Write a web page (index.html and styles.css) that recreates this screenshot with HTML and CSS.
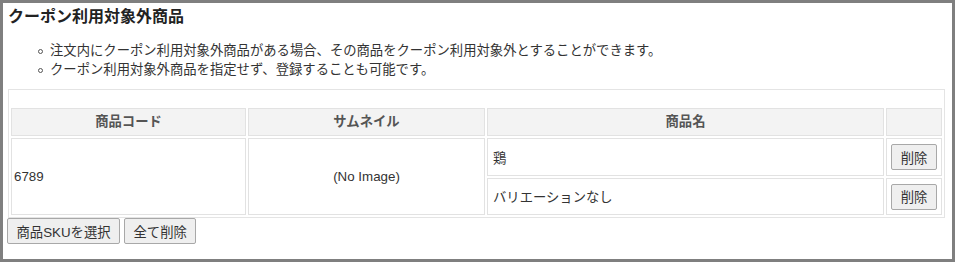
FILE: index.html
```html
<!DOCTYPE html>
<html lang="ja">
<head>
<meta charset="utf-8">
<link rel="stylesheet" href="styles.css">
</head>
<body>
<div class="frame">
  <h2 class="title">クーポン利用対象外商品</h2>
  <ul class="notes">
    <li>注文内にクーポン利用対象外商品がある場合、その商品をクーポン利用対象外とすることができます。</li>
    <li>クーポン利用対象外商品を指定せず、登録することも可能です。</li>
  </ul>
  <table class="items">
    <colgroup>
      <col class="c-code"><col class="c-thumb"><col class="c-name"><col class="c-act">
    </colgroup>
    <thead>
      <tr><th>商品コード</th><th>サムネイル</th><th>商品名</th><th></th></tr>
    </thead>
    <tbody>
      <tr class="r1">
        <td rowspan="2" class="code">6789</td>
        <td rowspan="2" class="thumb">(No Image)</td>
        <td class="name">鶏</td>
        <td class="act"><button class="btn">削除</button></td>
      </tr>
      <tr class="r2">
        <td class="name">バリエーションなし</td>
        <td class="act"><button class="btn">削除</button></td>
      </tr>
    </tbody>
  </table>
  <div class="actions">
    <button class="btn big">商品SKUを選択</button>
    <button class="btn big">全て削除</button>
  </div>
</div>
</body>
</html>
```
FILE: styles.css
```css
html, body { margin: 0; padding: 0; background: #fff; }
body {
  font-family: "Liberation Sans", Arial, "Noto Sans CJK JP", sans-serif;
  font-size: 13.33px;
  color: #333;
}
.frame {
  width: 944px;
  height: 256px;
  border: 3px solid #7f7f7f;
  padding: 0 0 0 5px;
}
.title {
  margin: 0;
  padding-top: 4px;
  font-size: 16px;
  line-height: 20px;
  font-weight: bold;
  color: #222;
}
.notes {
  margin: 14px 0 0 0;
  padding: 0 0 0 42px;
  list-style: none;
}
.notes li {
  position: relative;
  height: 19px;
  line-height: 19px;
}
.notes li::before {
  content: "";
  position: absolute;
  left: -12px;
  top: 8px;
  width: 3px;
  height: 3px;
  border: 1px solid #555;
  border-radius: 50%;
}
.items {
  margin-top: 10px;
  width: 936px;
  border: 1px solid #e4e4e4;
  border-spacing: 2px;
  padding-top: 16px;
  table-layout: fixed;
}
.c-code { width: 235px; }
.c-thumb { width: 237px; }
.c-name { width: 397px; }
.c-act { width: 56px; }
.items th, .items td {
  border: 1px solid #e2e2e2;
}
.items th {
  background: #f3f3f3;
  color: #555;
  font-weight: bold;
  height: 26px;
  line-height: 18px;
  padding: 0;
  text-align: center;
}
.items td { padding: 0; }
.r1 td.name, .r1 td.act { height: 36px; }
.r2 td.name, .r2 td.act { height: 35px; }
.code { padding-left: 2px !important; }
.thumb { text-align: center; }
.name { padding-left: 5px !important; }
.act { text-align: center; }
.btn {
  font-family: inherit;
  font-size: 13.33px;
  color: #333;
  background: #efefef;
  border: 1px solid #a8a8a8;
  border-radius: 2px;
  height: 26px;
  padding: 0 9px;
  margin: 0;
}
.actions {
  display: flex;
  gap: 4px;
  margin-top: 0;
  margin-left: -1px;
}
.big { padding: 0 8.5px; }
```
